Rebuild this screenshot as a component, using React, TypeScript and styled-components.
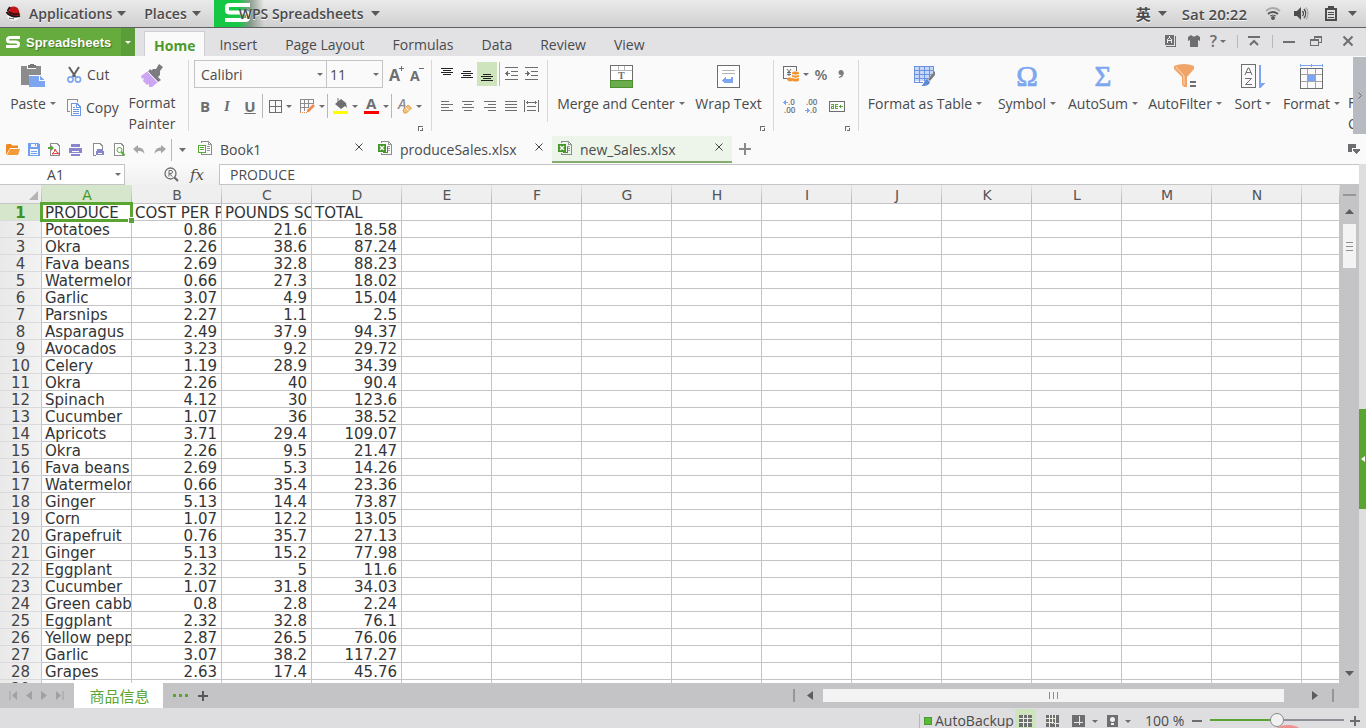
import React from "react";
import styled, { createGlobalStyle, css } from "styled-components";

const UI = `"Open Sans", "Noto Sans", "Noto Sans CJK SC", sans-serif`;
const SHEET = `"DejaVu Sans", "Noto Sans CJK SC", sans-serif`;
const ink = "#4a4a4c";
const line = "#c4c4c6";
const green = "#5aa532";
const gray = "#6e6e70";
const blue = "#7ea6f0";

const Global = createGlobalStyle`
  *, *::before, *::after { box-sizing: border-box; }
  body { margin: 0; overflow: hidden; background: #dedee0; font-family: ${UI}; font-size: 14px; color: ${ink}; }
  button, input, select { font: inherit; color: inherit; border: 0; background: none; padding: 0; margin: 0; outline: 0; }
  button { display: inline-flex; align-items: center; white-space: nowrap; }
  svg { display: block; flex: none; overflow: visible; }
`;

const Window = styled.div`
  display: flex;
  flex-direction: column;
  height: 100vh;
  overflow: hidden;
`;

/* ---------- desktop panel ---------- */
const Panel = styled.header`
  display: flex;
  align-items: center;
  flex: none;
  height: 28px;
  border-bottom: 1px solid #606062;
  background: linear-gradient(#eaeaea, #d0d0d0);
  font-weight: 600;
  text-shadow: 0 1px 0 #f6f6f6;
`;
const PanelMenu = styled.button<{ $ml: number }>`
  gap: 5px;
  height: 27px;
  margin-left: ${(p) => p.$ml}px;
  font-weight: 600;
  text-shadow: inherit;
`;
const MenuText = styled.span`
  padding-left: 3px;
`;
const InputMenu = styled(PanelMenu)`
  gap: 7px;
  font-size: 15px;
`;
const ActiveApp = styled(PanelMenu)`
  gap: 8px;
  padding-left: 25px;
  background: linear-gradient(90deg, #14c845 0, #14c845 24px, rgba(90, 120, 95, 0.65) 36px, rgba(200, 200, 200, 0) 50px);
  position: relative;
`;
const AppMark = styled.span`
  position: absolute;
  left: 11px;
  top: 3px;
  z-index: 0;
`;
const AppName = styled.span`
  position: relative;
`;
const Tray = styled.div`
  display: flex;
  align-items: center;
  margin-left: auto;
`;
const Clock = styled.span`
  margin: 0 19px 0 15px;
  font-size: 15px;
`;

/* ---------- ribbon tabs ---------- */
const TabBar = styled.nav`
  display: flex;
  align-items: stretch;
  flex: none;
  height: 28px;
  background: #e2e2e4;
`;
const AppButton = styled.button`
  width: 135px;
  margin-right: 9px;
  background: #65ab3d;
  color: #fff;
  font-family: "Liberation Sans", sans-serif;
  font-size: 13px;
  font-weight: 700;
  text-shadow: 1px 1px 1px #3e7422;
  svg { margin-left: 6px; }
`;
const AppLabel = styled.span`
  flex: 1;
  padding-left: 6px;
  text-align: left;
`;
const AppDrop = styled.span`
  display: flex;
  align-items: center;
  align-self: stretch;
  width: 14px;
  background: #5b9d39;
  svg { margin-left: 4px; }
`;
const RibbonTab = styled.button<{ $active?: boolean }>`
  padding: 5px 14px 0;
  ${(p) =>
    p.$active &&
    css`
      margin-top: 3px;
      padding: 2px 9px 0;
      border: 1px solid #cfcfd3;
      border-bottom: 0;
      background: #fafafa;
      color: #4c9a2a;
      font-weight: 700;
    `}
`;
const WindowTools = styled.div`
  display: flex;
  align-items: center;
  margin-left: auto;
  padding: 0 5px 2px 0;
`;
const ToolIcon = styled.button<{ $w: number }>`
  display: inline-flex;
  align-items: center;
  justify-content: center;
  width: ${(p) => p.$w}px;
  gap: 3px;
`;
const Help = styled.span`
  font-size: 16px;
  line-height: 20px;
  font-weight: 600;
  color: ${gray};
`;
const Bar = styled.span<{ $h: number }>`
  flex: none;
  width: 1px;
  height: ${(p) => p.$h}px;
  background: #b8b8bc;
`;

/* ---------- ribbon ---------- */
const Ribbon = styled.section`
  display: flex;
  flex: none;
  height: 78px;
  background: #fafafa;
  overflow: hidden;
`;
const Group = styled.div<{ $w: number; $short?: boolean }>`
  position: relative;
  display: flex;
  flex: none;
  width: ${(p) => p.$w}px;
  &::after {
    content: "";
    position: absolute;
    right: 0;
    top: 4px;
    width: 1px;
    height: ${(p) => (p.$short ? 62 : 71)}px;
    background: #d8d8da;
  }
`;
const Launcher = styled.button`
  position: absolute;
  right: 9px;
  bottom: 3px;
`;
const BigButton = styled.button<{ $w: number; $left?: boolean }>`
  flex: none;
  flex-direction: column;
  align-items: ${(p) => (p.$left ? "flex-start" : "center")};
  width: ${(p) => p.$w}px;
  padding-top: 7px;
`;
const BigIcon = styled.span`
  display: flex;
  align-items: center;
  height: 26px;
  margin-bottom: 4px;
`;
const BigLabel = styled.span<{ $left?: boolean }>`
  display: flex;
  align-items: center;
  gap: 4px;
  line-height: 21px;
  text-align: ${(p) => (p.$left ? "left" : "center")};
  white-space: pre;
`;
const Stack = styled.div<{ $w: number }>`
  display: flex;
  flex-direction: column;
  width: ${(p) => p.$w}px;
  padding: 2px 0 0 1px;
`;
const SmallButton = styled.button`
  gap: 5px;
  height: 33px;
`;
const Rows = styled.div<{ $pad: number }>`
  display: flex;
  flex-direction: column;
  padding: 4px 0 0 ${(p) => p.$pad}px;
`;
const Row = styled.div<{ $h: number }>`
  display: flex;
  align-items: center;
  height: ${(p) => p.$h}px;
`;
const Slot = styled.button<{ $w: number; $active?: boolean }>`
  justify-content: center;
  gap: 4px;
  width: ${(p) => p.$w}px;
  height: 24px;
  background: ${(p) => (p.$active ? "#cde4bd" : "none")};
`;
const Glyph = styled.span<{ $look?: "bold" | "italic" | "under" }>`
  font-size: 15px;
  line-height: 18px;
  color: ${gray};
  font-weight: ${(p) => (p.$look ? 700 : 600)};
  font-style: ${(p) => (p.$look === "italic" ? "italic" : "normal")};
  font-family: ${(p) => (p.$look === "italic" ? `"Liberation Serif", serif` : UI)};
  text-decoration: ${(p) => (p.$look === "under" ? "underline" : "none")};
`;
const Combo = styled.label<{ $w: number }>`
  display: flex;
  align-items: center;
  width: ${(p) => p.$w}px;
  height: 28px;
  padding: 0 3px 0 6px;
  border: 1px solid ${line};
  & + & { margin-left: -1px; padding-left: 3px; }
  select { flex: 1; min-width: 0; appearance: none; }
`;
const Actions = styled.div`
  display: flex;
  flex: 1;
  min-width: 0;
  overflow: hidden;
  padding-left: 4px;
`;
const ScrollRibbon = styled.button`
  flex: none;
  justify-content: center;
  width: 13px;
  margin-top: 1px;
  background: #b7bac1;
`;

/* ---------- quick access and documents ---------- */
const DocBar = styled.div`
  display: flex;
  align-items: center;
  flex: none;
  height: 30px;
  background: #fafafa;
`;
const Quick = styled.div`
  display: flex;
  align-items: center;
  width: 192px;
  padding: 1px 0 0 2px;
`;
const DocTab = styled.div<{ $active?: boolean }>`
  display: flex;
  align-items: center;
  width: 180px;
  height: 27px;
  margin-top: 1px;
  padding: 0 9px 0 6px;
  border-bottom: 2px solid ${(p) => (p.$active ? "#86ad70" : "transparent")};
  background: ${(p) => (p.$active ? "#edf5ea" : "none")};
`;
const DocName = styled.button`
  flex: 1;
  gap: 8px;
  padding-top: 2px;
  svg { margin-bottom: 4px; }
`;
const CloseDoc = styled.button`
  margin-bottom: 3px;
`;
const DocEnd = styled.span`
  margin-left: auto;
  padding-right: 6px;
`;

/* ---------- workspace ---------- */
const Workspace = styled.div`
  display: flex;
  flex: 1;
  min-height: 0;
`;
const Main = styled.main`
  display: flex;
  flex-direction: column;
  flex: 1;
  min-width: 0;
`;
const SidePane = styled.aside`
  display: flex;
  flex-direction: column;
  width: 7px;
  padding-top: 245px;
  background: #dedee0;
`;
const PaneHandle = styled.button`
  justify-content: center;
  height: 100px;
  background: ${green};
`;
const FormulaBar = styled.div`
  display: flex;
  flex: none;
  height: 21px;
  background: linear-gradient(#fafafa, #f0f0f0);
`;
const NameBox = styled.div`
  display: flex;
  align-items: center;
  width: 125px;
  padding-right: 3px;
  border: 1px solid ${line};
  border-left: 0;
  background: #fff;
  input { flex: 1; min-width: 0; padding-right: 4px; text-align: center; }
`;
const FxTools = styled.div`
  display: flex;
  align-items: center;
  width: 94px;
  padding-left: 39px;
  gap: 11px;
`;
const Fx = styled.button`
  font-family: "DejaVu Serif", serif;
  font-style: italic;
  font-size: 15px;
  line-height: 18px;
`;
const FormulaInput = styled.input`
  flex: 1;
  min-width: 0;
  padding-left: 10px !important;
  border: 1px solid ${line} !important;
  border-right: 0 !important;
  background: #fff !important;
`;
const SheetArea = styled.div`
  display: flex;
  flex: 1;
  min-height: 0;
`;
const Grid = styled.div`
  flex: 1;
  min-width: 0;
  overflow: hidden;
  background: #fff;
`;
const Table = styled.table`
  width: 100%;
  table-layout: fixed;
  border-collapse: separate;
  border-spacing: 0;
  font-family: ${SHEET};
  font-size: 15px;
  line-height: 16px;
  color: #333436;
`;
const ColHead = styled.th<{ $active?: boolean }>`
  height: 19px;
  padding: 3px 0 0;
  border-bottom: 1px solid ${line};
  background: linear-gradient(#e4e4e4, #b4b4b6) right / 1px 100% no-repeat, ${(p) => (p.$active ? "#d6e6cd" : "#efefef")};
  color: ${(p) => (p.$active ? "#3f9420" : "#555557")};
  font-size: 14px;
  font-weight: 400;
  line-height: 15px;
`;
const Corner = styled(ColHead)`
  svg { margin: 0 4px 0 auto; }
`;
const RowHead = styled.th<{ $active?: boolean }>`
  height: 17px;
  padding: 0;
  border-right: 1px solid ${line};
  border-bottom: 1px solid #dadadc;
  background: ${(p) => (p.$active ? "#d6e6cd" : "linear-gradient(90deg, #e9e9e9, #f2f2f2)")};
  color: ${(p) => (p.$active ? "#3f9420" : "#444446")};
  font-weight: ${(p) => (p.$active ? 700 : 400)};
`;
const RowNumber = styled.span`
  display: block;
  height: 18px;
  margin-bottom: -2px;
  line-height: 18px;
`;
const Cell = styled.td<{ $right?: boolean }>`
  position: relative;
  height: 17px;
  padding: 0;
  border-right: 1px solid ${line};
  border-bottom: 1px solid ${line};
  text-align: ${(p) => (p.$right ? "right" : "left")};
`;
const CellText = styled.span`
  display: block;
  height: 18px;
  margin-bottom: -2px;
  padding: 0 4px 0 3px;
  line-height: 18px;
  overflow: hidden;
  white-space: nowrap;
`;
const Cursor = styled.span`
  position: absolute;
  z-index: 1;
  inset: -2px;
  border: 3px solid ${green};
  pointer-events: none;
  &::after {
    content: "";
    position: absolute;
    right: -4px;
    bottom: -4px;
    width: 6px;
    height: 6px;
    border: solid #fff;
    border-width: 1px 0 0 1px;
    background: ${green};
  }
`;
const VScroll = styled.div`
  display: flex;
  flex-direction: column;
  align-items: center;
  flex: none;
  width: 19px;
  padding: 9px 0 7px;
  background: #c4c4c6;
`;
const Splitter = styled.span`
  width: 13px;
  height: 2px;
  margin-bottom: 13px;
  background: #969698;
`;
const VThumb = styled.span`
  display: flex;
  flex-direction: column;
  align-items: center;
  justify-content: center;
  gap: 3px;
  width: 13px;
  height: 44px;
  margin: 10px 0 auto;
  background: #f3f3f3;
`;
const VGrip = styled.i`
  width: 7px;
  height: 1px;
  background: #8e8e90;
`;
const SheetBar = styled.div`
  display: flex;
  align-items: center;
  flex: none;
  height: 25px;
  background: #c4c4c6;
`;
const SheetNav = styled.div`
  display: flex;
  align-items: center;
  justify-content: space-between;
  width: 74px;
  padding: 0 10px 0 9px;
`;
const SheetTab = styled.button`
  justify-content: center;
  align-self: stretch;
  width: 89px;
  padding-left: 2px;
  background: #fff;
  color: ${green};
  font-family: "Noto Sans CJK SC", sans-serif;
  font-size: 15px;
`;
const More = styled.button`
  gap: 3px;
  margin: 0 10px 0 10px;
`;
const Dot = styled.i`
  width: 3px;
  height: 3px;
  background: ${green};
`;
const HScroll = styled.div`
  display: flex;
  align-items: center;
  width: calc(42% - 5px);
  margin-left: auto;
  padding-right: 25px;
`;
const HEnd = styled.span`
  width: 2px;
  height: 13px;
  background: #969698;
`;
const HThumb = styled.span`
  display: flex;
  align-items: center;
  justify-content: center;
  gap: 3px;
  flex: 1;
  height: 13px;
  margin: 0 28px 0 10px;
  background: #f3f3f3;
`;
const HGrip = styled.i`
  width: 1px;
  height: 7px;
  background: #8e8e90;
`;
const HArrow = styled.button<{ $l: number; $r: number }>`
  margin: 0 ${(p) => p.$r}px 0 ${(p) => p.$l}px;
`;

/* ---------- status bar ---------- */
const Status = styled.footer`
  position: relative;
  display: flex;
  align-items: center;
  justify-content: flex-end;
  flex: none;
  height: 20px;
  padding: 6px 6px 0 0;
  background: #dedee0;
  overflow: hidden;
`;
const BackupLight = styled.i`
  width: 8px;
  height: 8px;
  margin: 0 3px 0 4px;
  border: 1px solid #4a9a2c;
  background: #58b838;
`;
const Backup = styled.span`
  width: 80px;
  line-height: 18px;
`;
const View = styled.button<{ $w: number; $active?: boolean }>`
  flex: none;
  justify-content: center;
  gap: 7px;
  align-self: flex-end;
  width: ${(p) => p.$w}px;
  height: 19px;
  padding-top: 5px;
  background: ${(p) => (p.$active ? "#cde4bd" : "none")};
`;
const ZoomText = styled.span`
  width: 47px;
  margin-left: 8px;
  line-height: 18px;
  white-space: nowrap;
`;
const ZoomRange = styled.input`
  appearance: none;
  width: 134px;
  height: 16px;
  margin: 0 6px 2px 8px !important;
  background: linear-gradient(90deg, ${green} 50%, #8e8e96 50%) center / 100% 2px no-repeat !important;
  &::-webkit-slider-thumb {
    appearance: none;
    width: 14px;
    height: 14px;
    border: 1px solid #8a8a8c;
    border-radius: 50%;
    background: #f1f1f1;
  }
`;
const Blob = styled.span`
  position: absolute;
  right: 62px;
  top: 17px;
  width: 32px;
  height: 20px;
  border-radius: 50%;
  background: #ee9090;
`;

/* ---------- drawings ---------- */
type D = { w: number; h: number; children: React.ReactNode; soft?: boolean };
const Svg = ({ w, h, children, soft }: D) => (
  <svg width={w} height={h} viewBox={`0 0 ${w} ${h}`} fill="none" shapeRendering={soft ? "auto" : "crispEdges"} aria-hidden="true">
    {children}
  </svg>
);
const Caret = ({ c = gray, big }: { c?: string; big?: boolean }) =>
  big ? (
    <Svg w={9} h={5} soft><path d="M0 0h9L4.500 5z" fill={c} /></Svg>
  ) : (
    <Svg w={6} h={3} soft><path d="M0 0h6L3 3z" fill={c} /></Svg>
  );
const LogoS = ({ w, h, t }: { w: number; h: number; t: number }) => {
  const i = t / 2;
  const m = h / 2;
  return (
    <Svg w={w} h={h} soft>
      <path d={`M${w} ${i}H${i + 3}Q${i} ${i} ${i} ${i + 2}V${m - 2}Q${i} ${m} ${i + 3} ${m}H${w - i - 3}Q${w - i} ${m} ${w - i} ${m + 2}V${h - i - 2}Q${w - i} ${h - i} ${w - i - 3} ${h - i}H0`} stroke="#fff" strokeWidth={t} />
    </Svg>
  );
};
const Lines = ({ rows, c = gray, w = 13, h = 13 }: { rows: number[][]; c?: string; w?: number; h?: number }) => (
  <Svg w={w} h={h}>
    {rows.map(([x, y, l]) => <rect key={y} x={x} y={y} width={l} height="1" fill={c} />)}
  </Svg>
);
const Hat = () => (
  <Svg w={15} h={15} soft>
    <path d="M1 8c0 4 2.500 6.500 6.500 6.500S14 12 14 9z" fill="#f8f8f8" />
    <path d="M4 1.500C6 0 9 0 11 1.500c1.500 1 2 3 2.500 5.500 1 1 1 3-1 3.500C8 11 3 9 1 6.500 1 5 2.500 5 3.200 5z" fill="#c41418" />
    <path d="M3 5.500C5 8 10 9 13 7.500" stroke="#1c1414" strokeWidth="1.500" />
    <path d="M.5 6C2 9 8 12 14 10M4 1L1.500 5" stroke="#1c1414" strokeWidth="1.800" />
    <path d="M3 12c2 1 3 0 5 1" stroke="#555" />
  </Svg>
);
const Paste = () => (
  <Svg w={25} h={24}>
    <path d="M1 2h5v3h9V2h5v9H8v10H0V2z" fill="#8c8c8e" />
    <path d="M7 1h2V0h4v1h2v3H7z" fill="#77777a" />
    <path d="M8 12h10v5h6v6H8z" fill={blue} />
    <path d="M19 12l5 4h-5z" fill={blue} />
  </Svg>
);
const Cut = () => (
  <Svg w={15} h={16} soft>
    <path d="M2 0l6.500 10M12 0L5.500 10" stroke="#5f5f62" strokeWidth="2" />
    <circle cx="3.500" cy="12.500" r="2.600" stroke={blue} strokeWidth="1.600" />
    <circle cx="11" cy="12.500" r="2.600" stroke={blue} strokeWidth="1.600" />
  </Svg>
);
const Copy = () => (
  <Svg w={14} h={17}>
    <path d="M3 12.500H.5V.5H10V3" stroke="#8c8c8e" />
    <path d="M4.500 4.500H10L13.500 8v8.500h-9z" stroke="#6d96e4" fill="#fff" />
    <path d="M9.500 4v4.500H14M6 8.500h2M6 10.500h6M6 12.500h6M6 14.500h6" stroke="#6d96e4" />
  </Svg>
);
const Brush = () => (
  <Svg w={24} h={24} soft>
    <path d="M10 5l11 11-3 2-10-10z M13 5l3 0 3-5 4 3-3 4v4l-3 3-7-6z" fill="#7c7c7e" />
    <path d="M8 7L1 12l1 3 2-1-1 3 4 4 2-1v3l3 0 6-5z" fill="#cda6f3" />
    <path d="M7.500 7.500L17.500 18" stroke="#fafafa" />
  </Svg>
);
const Big = ({ sign }: { sign: string }) => (
  <Svg w={16} h={18}>
    <text x="0" y="16" fontFamily="Open Sans" fontWeight="700" fontSize={sign === "+" ? 16 : 14} fill={gray}>A</text>
    <path d={sign === "+" ? "M10 3.500h5M12.500 1v5" : "M9 3.500h5"} stroke={gray} />
  </Svg>
);
const Borders = () => <Svg w={13} h={13}><path d="M.5.5h12v12H.5zM6.500 0v13M0 6.500h13" stroke={gray} /></Svg>;
const DrawBorders = () => (
  <Svg w={16} h={16}>
    <path d="M1.500 14V1.500H14.500V6M5.500 1v12M9.500 1v9M1 5.500h13M1 9.500h9" stroke="#8c8c8e" />
    <path d="M8 12l6-6 2 2-6 6H8z" fill="#f08a54" shapeRendering="auto" />
    <path d="M1 14.500h1m1 0h1m1 0h1m1 0h1" stroke="#f08a54" />
  </Svg>
);
const Fill = () => (
  <Svg w={15} h={16} soft>
    <path d="M2 6l6-5 5 4 1 5-2-2-4 3z" fill={gray} />
    <path d="M5 0v4" stroke={gray} />
    <rect y="13" width="15" height="3" fill="#ffff00" />
  </Svg>
);
const FontColor = () => (
  <Svg w={15} h={16}>
    <text x="2" y="11" fontFamily="Open Sans" fontWeight="700" fontSize="15" fill={gray}>A</text>
    <rect y="13" width="15" height="3" fill="#ff0000" />
  </Svg>
);
const ClearFmt = () => (
  <Svg w={14} h={16} soft>
    <text x="0" y="11" fontFamily="Open Sans" fontStyle="italic" fontSize="14" fontWeight="600" fill="#8c8c8e">A</text>
    <path d="M5 12l5-5 3.500 3-5 5H6z" fill="#f3c27c" stroke="#e89c3c" />
    <path d="M7.500 9.500l3 3" stroke="#fff" />
  </Svg>
);
const Indent = ({ out }: { out?: boolean }) => (
  <Svg w={13} h={14}>
    <path d="M0 .5h13M6 4.500h7M6 8.500h7M0 12.500h13" stroke={gray} />
    <path d={out ? "M0 6.500h5M1.500 5v3M2.500 4v5" : "M0 6.500h5M3.500 5v3M2.500 4v5"} stroke={gray} />
  </Svg>
);
const Distribute = () => (
  <Svg w={15} h={12}>
    <path d="M.5 0v12M14.500 0v12M2 2.500h11M3.500 1v3M11.500 1v3M3 6.500h9M3 10.500h9" stroke={gray} />
  </Svg>
);
const LaunchMark = () => <Svg w={5} h={5}><path d="M5 .5H.5V5M2 4.500h2.500V2" stroke={gray} /></Svg>;
const Merge = () => (
  <Svg w={23} h={23}>
    <rect x=".5" y=".5" width="22" height="22" rx="1" stroke={gray} fill="#fff" />
    <path d="M1 5.500h21M8.500 1v5M14.500 1v5" stroke="#b4b4b6" />
    <rect x="0" y="15" width="23" height="8" fill="#6aab4c" />
    <path d="M0 15.500h23M.5 15v7.500h22V15" stroke="#4c8e30" />
    <text x="8" y="14" fontFamily="Liberation Serif" fontWeight="700" fontSize="10" fill={gray}>T</text>
  </Svg>
);
const Wrap = () => (
  <Svg w={23} h={23}>
    <rect x=".5" y=".5" width="22" height="22" rx="1" stroke={gray} fill="#fff" />
    <path d="M5 5.500h13M5 8.500h13" stroke="#b4b4b6" />
    <path d="M5 15l4-3v2h5v-2h2v6H7z" fill={blue} />
  </Svg>
);
const Currency = () => (
  <Svg w={16} h={16} soft>
    <path d="M5 12.500H.5V.5h13V5" stroke={gray} shapeRendering="crispEdges" />
    <path d="M4 3l2 3 2-3M4 6.500h4M4 8.500h4M6 6v4" stroke={gray} />
    <path d="M9 7c0-2 7-2 7 0v7c0 2-7 2-7 0z" fill="#f0962e" />
    <path d="M4 13c0-2 5-2 5 0v2c-2 1-5 0-5-2z" fill="#f0962e" />
    <path d="M9 8.500q3.500 1.500 7 0M9 11.500q3.500 1.500 7 0" stroke="#fff" />
  </Svg>
);
const CommaStyle = () => (
  <Svg w={6} h={8} soft>
    <circle cx="3" cy="2.500" r="2.500" fill="#7c7c7e" />
    <path d="M5 2.500q.5 3.500-4 5" stroke="#7c7c7e" strokeWidth="1.300" />
  </Svg>
);
const Decimals = ({ more }: { more?: boolean }) => (
  <Svg w={14} h={16}>
    <text x={more ? 5 : 1} y="7" fontFamily="Open Sans" fontSize="8" fontWeight="600" fill={gray}>{more ? ".0" : ".00"}</text>
    <text x={more ? 1 : 5} y="15" fontFamily="Open Sans" fontSize="8" fontWeight="600" fill={gray}>{more ? ".00" : ".0"}</text>
    <path d={more ? "M0 4.500h5M1.500 3v3M2.500 2v5" : "M0 12.500h5M3.500 11v3M2.500 10v5"} stroke={blue} />
  </Svg>
);
const CellFmt = () => (
  <Svg w={16} h={11}>
    <rect x=".5" y=".5" width="15" height="10" stroke={gray} />
    <path d="M2 3.500h3M4.500 3v5M2 7.500h3M2.500 5v3M2 5.500h3M6.500 3v5M6 3.500h3M6 5.500h3M6 7.500h3M10 5.500h4M11.500 4v3" stroke="#5aa83a" />
  </Svg>
);
const TableFmt = () => (
  <Svg w={22} h={21} soft>
    <path d="M1 1h19v9l-7 5H1z" fill="#c5d6f6" />
    <path d="M1 .5h19M1 4.500h19M1 8.500h18M1 12.500h13M1 16.500h8M.5 0v17M5.500 0v17M10.500 0v15M15.500 0v11M19.500 0v7" stroke="#6b93dd" shapeRendering="crispEdges" />
    <path d="M21 5v4l-5 6-2-2z" fill="#7c7c7e" />
    <path d="M13 13l3 3c-1 4-5 4-9 4 3-1 3-6 6-7z" fill="#5f88d6" />
  </Svg>
);
const Greek = ({ ch }: { ch: string }) => (
  <Svg w={24} h={24} soft>
    <text x="12" y="22" textAnchor="middle" fontFamily="Liberation Serif" fontSize="29" fontWeight="400" stroke={blue} strokeWidth=".7" fill={blue}>{ch}</text>
  </Svg>
);
const Filter = () => (
  <Svg w={22} h={24} soft>
    <path d="M0 2q10-4 20 0v3l-7 8v10h-3l-2-2v-8L0 5z" fill="#f2a468" />
    <path d="M2 3l8 9v9" stroke="#fbd9be" />
    <path d="M16 18h6M16 22h6" stroke={gray} strokeWidth="2" />
  </Svg>
);
const Sort = () => (
  <Svg w={24} h={24}>
    <rect x=".5" y=".5" width="14" height="23" stroke={gray} />
    <path d="M4 11l3-7h1l3 7M5 8.500h5M4 14.500h6.500L4.500 20.500H11" stroke={gray} shapeRendering="auto" />
    <path d="M18 1h2v18h4l-5 5h-1z" fill={blue} />
  </Svg>
);
const FormatCells = () => (
  <Svg w={23} h={25}>
    <path d="M0 1.500h23M.5 0v3M11.500 0v3M22.500 0v3" stroke={blue} />
    <path d="M.5 4.500h22v20H.5zM7.500 5v19M15.500 5v19M1 10.500h21M1 17.500h21" stroke="#a4a4a6" />
    <path d="M.5 4.500h22v20H.5z" stroke={gray} />
    <rect x="8" y="11" width="7" height="6" fill={blue} />
  </Svg>
);
const Folder = () => (
  <Svg w={14} h={11} soft>
    <path d="M0 11V1l1-1h4l1 1.500h6V4H4z" fill="#f08a20" />
    <path d="M4 5h10l-2 6H1z" fill="#f59a3a" />
  </Svg>
);
const Save = () => (
  <Svg w={12} h={13}>
    <path d="M0 0h10l2 2v11H0z" fill="#73a0ec" />
    <path d="M3 1h6v3H3zM2 6h8v6H2z" fill="#f4f8ff" />
    <path d="M3 8.500h6M3 10.500h6M7.500 1v2" stroke="#73a0ec" />
  </Svg>
);
const Page = ({ kind }: { kind: "pdf" | "print" | "find" }) => (
  <Svg w={13} h={13} soft>
    <path d="M3 .5h6L11.500 3v9.500H2.500v-12z" stroke="#8c8c8e" fill="#fff" shapeRendering="crispEdges" />
    {kind === "pdf" && <><path d="M0 4h3V2l3 3-3 3V6H0z" fill="#58a838" /><path d="M4 11q3-2 3-5 1 4 5 5-4-1-8 0" stroke="#dd3a3a" /></>}
    {kind === "print" && <><path d="M5 6h8v7H5z" fill="#fff" /><path d="M6 6h6v2h1v4H5V8h1z" fill="#8a86cc" /><path d="M7 10.500h4" stroke="#fff" /></>}
    {kind === "find" && <><circle cx="7.500" cy="7" r="2.500" stroke="#58a838" fill="#fff" /><path d="M9.500 9l3 3.500" stroke="#58a838" strokeWidth="2" /></>}
  </Svg>
);
const Printer = () => (
  <Svg w={13} h={12}>
    <path d="M2 0h9v3H2zM0 4h13v5H0zM2 10h9v2H2z" fill="#8a86cc" />
    <path d="M3 7.500h7" stroke="#fff" />
  </Svg>
);
const Undo = ({ flip }: { flip?: boolean }) => (
  <Svg w={12} h={9} soft>
    <path transform={flip ? "translate(12 0) scale(-1 1)" : undefined} d="M0 4l5-4v2.500c4 0 6 2 6.500 6.500C10 6.500 8 6 5 6v2.500z" fill="#a6a6a8" />
  </Svg>
);
const DocIcon = ({ x }: { x?: boolean }) => (
  <Svg w={14} h={14}>
    <path d="M3.500 2V.5h7l3 3v10h-10V12" stroke="#8c8c8e" />
    <path d="M10.500 0v3.500H14M9 5.500h3M9 7.500h3M9 9.500h3" stroke="#9c9c9e" />
    {x ? (
      <>
        <path d="M9.500 6v5.500H5" stroke="#46952a" />
        <rect x="0" y="3" width="8" height="8" fill="#46952a" />
        <path d="M2 5l4 4M6 5L2 9" stroke="#fff" strokeWidth="1.400" shapeRendering="auto" />
      </>
    ) : (
      <><rect x=".5" y="4.500" width="7" height="7" fill="#fff" stroke="#58a838" /><path d="M2 6.500h4M2 8.500h4" stroke="#58a838" /></>
    )}
  </Svg>
);
const Cross = ({ s, t = 1 }: { s: number; t?: number }) => (
  <Svg w={s} h={s} soft><path d={`M.5.5L${s - 0.5} ${s - 0.5}M${s - 0.5}.5L.5 ${s - 0.5}`} stroke={t > 1 ? gray : "#444"} strokeWidth={t} /></Svg>
);
const Plus = ({ s, c = gray }: { s: number; c?: string }) => (
  <Svg w={s} h={s}><path d={`M0 ${s / 2}h${s}M${s / 2} 0v${s}`} stroke={c} strokeWidth="2" /></Svg>
);
const Wifi = () => (
  <Svg w={14} h={13} soft>
    <path d="M0 4q7-6 14 0" stroke="#a8a8aa" strokeWidth="2" />
    <path d="M2 7q5-4 10 0" stroke="#58585a" strokeWidth="2" />
    <path d="M4 9q3-2 6 0" stroke="#58585a" strokeWidth="1" />
    <circle cx="7" cy="11" r="2" fill="#58585a" />
  </Svg>
);
const Sound = () => (
  <Svg w={15} h={14} soft>
    <path d="M0 4h3l4-4v13L3 9H0z" fill="#4c4c4e" />
    <path d="M8.500 4q2 2.500 0 5M10 2q3.500 4.500 0 9" stroke="#4c4c4e" strokeWidth="1.300" />
    <path d="M12 .5q4 6 0 12" stroke="#b0b0b2" strokeWidth="1.500" />
  </Svg>
);
const Battery = () => (
  <Svg w={12} h={15}>
    <path d="M1 3h10v11H1zM4 1h4v2H4z" stroke="#4c4c4e" strokeWidth="2" />
    <path d="M3 6h6M3 8.500h6M3 11h6" stroke="#4c4c4e" />
  </Svg>
);
const Book = () => (
  <Svg w={11} h={12}>
    <path d="M0 0h9v10H0z" fill={gray} />
    <path d="M10.500 1v10.500H1" stroke={gray} />
    <path d="M2.500 8V5l2-3 2 3v3M3 5.500h3" stroke="#f0f0f0" />
  </Svg>
);
const Shirt = () => <Svg w={12} h={12} soft><path d="M0 2l3-2q3 3 6 0l3 2v4l-2-1v7H2V5L0 6z" fill={gray} /></Svg>;
const Collapse = () => <Svg w={12} h={10} soft><path d="M0 1h12" stroke={gray} strokeWidth="2" /><path d="M2 9l4-4 4 4" stroke={gray} strokeWidth="2" /></Svg>;
const Restore = () => <Svg w={12} h={10}><path d="M4 3V.5h7.500v6H9M3.500 1H12M.5 3.500h7.500v6H.5zM0 4.500h8" stroke={gray} /></Svg>;
const Magnifier = () => (
  <Svg w={15} h={15} soft>
    <circle cx="6.500" cy="6.500" r="5.500" stroke={gray} strokeWidth="1.300" />
    <path d="M10.500 10.500L14 14" stroke={gray} strokeWidth="2.200" />
    <path d="M5 9.500v-6h2q1.500 0 1.500 1.500T7 6.500H5l3.500 3" stroke={gray} />
  </Svg>
);
const Arrow = ({ dir, c = "#5c5c5e" }: { dir: "l" | "r" | "u" | "d"; c?: string }) => {
  const side = dir === "l" || dir === "r";
  const d = { l: "M6 0v9L0 4.500z", r: "M0 0v9l6-4.500z", u: "M0 5h9L4.500 0z", d: "M0 0h9L4.500 5z" }[dir];
  return <Svg w={side ? 6 : 9} h={side ? 9 : 5} soft><path d={d} fill={c} /></Svg>;
};
const Jump = ({ end }: { end?: boolean }) => (
  <Svg w={8} h={9} soft>
    <path d={end ? "M0 0v9l5-4.500z" : "M8 0v9L3 4.500z"} fill="#a0a0a2" />
    <path d={end ? "M7 0v9" : "M1 0v9"} stroke="#a0a0a2" />
  </Svg>
);
const GridView = ({ cut }: { cut?: boolean }) => (
  <Svg w={13} h={12}>
    <rect width="13" height="12" fill={gray} />
    <path d={cut ? "M0 3.500h10M0 7.500h8M3.500 0v12M6.500 0v9M9.500 0v12M8 8.500h5" : "M0 3.500h13M0 7.500h13M4.500 0v12M8.500 0v12"} stroke="#e6efe0" />
  </Svg>
);
const FreezeView = () => <Svg w={13} h={12}><rect width="13" height="12" fill={gray} /><path d="M7.500 1v9M2 7.500h9" stroke="#e8e8ea" strokeWidth="1" /></Svg>;
const BulbView = () => <Svg w={11} h={12} soft><rect width="11" height="12" fill={gray} /><circle cx="5.500" cy="4.500" r="2.500" fill="#eee" /><path d="M4 9h3" stroke="#eee" strokeWidth="2" /></Svg>;

/* ---------- data ---------- */
const columns = "ABCDEFGHIJKLMN".split("");
const rows: string[][] = [
  ["PRODUCE", "COST PER POUND", "POUNDS SOLD", "TOTAL"],
  ["Potatoes", "0.86", "21.6", "18.58"],
  ["Okra", "2.26", "38.6", "87.24"],
  ["Fava beans", "2.69", "32.8", "88.23"],
  ["Watermelon", "0.66", "27.3", "18.02"],
  ["Garlic", "3.07", "4.9", "15.04"],
  ["Parsnips", "2.27", "1.1", "2.5"],
  ["Asparagus", "2.49", "37.9", "94.37"],
  ["Avocados", "3.23", "9.2", "29.72"],
  ["Celery", "1.19", "28.9", "34.39"],
  ["Okra", "2.26", "40", "90.4"],
  ["Spinach", "4.12", "30", "123.6"],
  ["Cucumber", "1.07", "36", "38.52"],
  ["Apricots", "3.71", "29.4", "109.07"],
  ["Okra", "2.26", "9.5", "21.47"],
  ["Fava beans", "2.69", "5.3", "14.26"],
  ["Watermelon", "0.66", "35.4", "23.36"],
  ["Ginger", "5.13", "14.4", "73.87"],
  ["Corn", "1.07", "12.2", "13.05"],
  ["Grapefruit", "0.76", "35.7", "27.13"],
  ["Ginger", "5.13", "15.2", "77.98"],
  ["Eggplant", "2.32", "5", "11.6"],
  ["Cucumber", "1.07", "31.8", "34.03"],
  ["Green cabbage", "0.8", "2.8", "2.24"],
  ["Eggplant", "2.32", "32.8", "76.1"],
  ["Yellow pepper", "2.87", "26.5", "76.06"],
  ["Garlic", "3.07", "38.2", "117.27"],
  ["Grapes", "2.63", "17.4", "45.76"],
  [],
];

type ToolProps = { w: number; icon: React.ReactNode; label: string; drop?: boolean; left?: boolean };
const Tool = ({ w, icon, label, drop, left }: ToolProps) => (
  <BigButton $w={w} $left={left}>
    <BigIcon>{icon}</BigIcon>
    <BigLabel $left={left}>{label}{drop && <Caret />}</BigLabel>
  </BigButton>
);

export default function App() {
  return (
    <Window>
      <Global />
      <Panel>
        <PanelMenu $ml={6}><Hat /><MenuText>Applications</MenuText><Caret big c="#58585a" /></PanelMenu>
        <PanelMenu $ml={18}>Places<Caret big c="#58585a" /></PanelMenu>
        <ActiveApp $ml={13}>
          <AppMark><LogoS w={25} h={19} t={4} /></AppMark>
          <AppName>WPS Spreadsheets</AppName><Caret big c="#58585a" />
        </ActiveApp>
        <Tray>
          <InputMenu $ml={0}>英<Caret big c="#58585a" /></InputMenu>
          <Clock>Sat 20:22</Clock>
          <ToolIcon $w={14} aria-label="Network"><Wifi /></ToolIcon>
          <ToolIcon $w={43} aria-label="Volume"><Sound /></ToolIcon>
          <ToolIcon $w={15} aria-label="Battery"><Battery /></ToolIcon>
          <ToolIcon $w={28} aria-label="System menu"><Caret big c="#58585a" /></ToolIcon>
        </Tray>
      </Panel>

      <TabBar>
        <AppButton>
          <LogoS w={14} h={12} t={3} />
          <AppLabel>Spreadsheets</AppLabel>
          <AppDrop><Caret c="#fff" /></AppDrop>
        </AppButton>
        <RibbonTab $active>Home</RibbonTab>
        {["Insert", "Page Layout", "Formulas", "Data", "Review", "View"].map((t) => <RibbonTab key={t}>{t}</RibbonTab>)}
        <WindowTools>
          <ToolIcon $w={22} aria-label="Translate"><Book /></ToolIcon>
          <ToolIcon $w={26} aria-label="Skin"><Shirt /></ToolIcon>
          <ToolIcon $w={22} aria-label="Help"><Help>?</Help><Caret /></ToolIcon>
          <ToolIcon as="span" $w={16}><Bar $h={13} /></ToolIcon>
          <ToolIcon $w={18} aria-label="Collapse ribbon"><Collapse /></ToolIcon>
          <ToolIcon as="span" $w={18}><Bar $h={13} /></ToolIcon>
          <ToolIcon $w={16} aria-label="Minimize"><Lines w={12} h={4} rows={[[0, 2, 12], [0, 3, 12]]} /></ToolIcon>
          <ToolIcon $w={38} aria-label="Restore"><Restore /></ToolIcon>
          <ToolIcon $w={26} aria-label="Close"><Cross s={10} t={2} /></ToolIcon>
        </WindowTools>
      </TabBar>

      <Ribbon>
        <Group $w={189}>
          <Tool w={66} icon={<Paste />} label="Paste" drop />
          <Stack $w={57}>
            <SmallButton><Cut />Cut</SmallButton>
            <SmallButton><Copy />Copy</SmallButton>
          </Stack>
          <Tool w={58} icon={<Brush />} label={"Format\nPainter"} />
        </Group>
        <Group $w={243}>
          <Rows $pad={5}>
            <Row $h={28}>
              <Combo $w={133}><select aria-label="Font"><option>Calibri</option></select><Caret /></Combo>
              <Combo $w={57}><select aria-label="Font size"><option>11</option></select><Caret /></Combo>
              <Slot $w={28} aria-label="Grow font"><Big sign="+" /></Slot>
              <Slot $w={14} aria-label="Shrink font"><Big sign="-" /></Slot>
            </Row>
            <Row $h={36}>
              <Slot $w={22}><Glyph $look="bold">B</Glyph></Slot>
              <Slot $w={22}><Glyph $look="italic">I</Glyph></Slot>
              <Slot $w={24}><Glyph $look="under">U</Glyph></Slot>
              <Bar $h={24} />
              <Slot $w={34} aria-label="Borders"><Borders /><Caret /></Slot>
              <Slot $w={30} aria-label="Draw borders"><DrawBorders /><Caret /></Slot>
              <Bar $h={24} />
              <Slot $w={34} aria-label="Fill color"><Fill /><Caret /></Slot>
              <Slot $w={29} aria-label="Font color"><FontColor /><Caret /></Slot>
              <Bar $h={24} />
              <Slot $w={36} aria-label="Clear format"><ClearFmt /><Caret /></Slot>
            </Row>
          </Rows>
          <Launcher aria-label="Font settings"><LaunchMark /></Launcher>
        </Group>
        <Group $w={116} $short>
          <Rows $pad={5}>
            <Row $h={28}>
              <Slot $w={20} aria-label="Align top"><Lines c="#222" rows={[[0, 0, 12], [2, 2, 8], [0, 4, 12], [2, 6, 8]]} /></Slot>
              <Slot $w={20} aria-label="Align middle"><Lines c="#222" rows={[[2, 3, 8], [0, 5, 12], [2, 7, 8], [0, 9, 12]]} /></Slot>
              <Slot $w={20} $active aria-label="Align bottom"><Lines c="#222" rows={[[2, 6, 8], [0, 8, 12], [2, 10, 8], [0, 12, 12]]} /></Slot>
              <ToolIcon as="span" $w={5}><Bar $h={24} /></ToolIcon>
              <Slot $w={19} aria-label="Decrease indent"><Indent out /></Slot>
              <Slot $w={21} aria-label="Increase indent"><Indent /></Slot>
            </Row>
            <Row $h={36}>
              <Slot $w={20} aria-label="Align left"><Lines h={10} rows={[[0, 0, 8], [0, 3, 12], [0, 6, 8], [0, 9, 12]]} /></Slot>
              <Slot $w={23} aria-label="Center"><Lines h={10} rows={[[0, 0, 12], [2, 3, 8], [0, 6, 12], [2, 9, 8]]} /></Slot>
              <Slot $w={21} aria-label="Align right"><Lines h={10} rows={[[0, 0, 12], [4, 3, 8], [0, 6, 12], [4, 9, 8]]} /></Slot>
              <Slot $w={20} aria-label="Justify"><Lines h={10} rows={[[0, 0, 12], [0, 3, 12], [0, 6, 12], [0, 9, 12]]} /></Slot>
              <Slot $w={20} aria-label="Distribute"><Distribute /></Slot>
            </Row>
          </Rows>
        </Group>
        <Group $w={226}>
          <Tool w={146} icon={<Merge />} label="Merge and Center" drop />
          <Tool w={69} icon={<Wrap />} label="Wrap Text" />
          <Launcher aria-label="Alignment settings"><LaunchMark /></Launcher>
        </Group>
        <Group $w={85}>
          <Rows $pad={5}>
            <Row $h={28}>
              <Slot $w={34} aria-label="Currency"><Currency /><Caret /></Slot>
              <Slot $w={16}><Glyph>%</Glyph></Slot>
              <Slot $w={24} aria-label="Comma style"><CommaStyle /></Slot>
            </Row>
            <Row $h={36}>
              <Slot $w={22} aria-label="Increase decimal"><Decimals more /></Slot>
              <Slot $w={22} aria-label="Decrease decimal"><Decimals /></Slot>
              <Slot $w={28} aria-label="Cell format"><CellFmt /></Slot>
            </Row>
          </Rows>
          <Launcher aria-label="Number settings"><LaunchMark /></Launcher>
        </Group>
        <Actions>
          <Tool w={124} icon={<TableFmt />} label="Format as Table" drop />
          <Tool w={80} icon={<Greek ch="Ω" />} label="Symbol" drop />
          <Tool w={72} icon={<Greek ch="Σ" />} label="AutoSum" drop />
          <Tool w={92} icon={<Filter />} label="AutoFilter" drop />
          <Tool w={44} icon={<Sort />} label="Sort" drop />
          <Tool w={73} icon={<FormatCells />} label="Format" drop />
          <Tool w={50} icon={null} label={"Freeze\nCells"} left />
        </Actions>
        <ScrollRibbon aria-label="More tools"><Svg w={4} h={7} soft><path d="M.5.5l3 3-3 3" stroke={gray} /></Svg></ScrollRibbon>
      </Ribbon>

      <DocBar>
        <Quick>
          <ToolIcon $w={22} aria-label="Open"><Folder /></ToolIcon>
          <ToolIcon $w={20} aria-label="Save"><Save /></ToolIcon>
          <ToolIcon $w={21} aria-label="Export PDF"><Page kind="pdf" /></ToolIcon>
          <ToolIcon $w={21} aria-label="Print"><Printer /></ToolIcon>
          <ToolIcon $w={22} aria-label="Quick print"><Page kind="print" /></ToolIcon>
          <ToolIcon $w={20} aria-label="Print preview"><Page kind="find" /></ToolIcon>
          <ToolIcon $w={21} aria-label="Undo"><Undo /></ToolIcon>
          <ToolIcon $w={22} aria-label="Redo"><Undo flip /></ToolIcon>
          <Bar $h={22} />
          <ToolIcon $w={20} aria-label="Customize"><Svg w={7} h={4} soft><path d="M0 0h7L3.500 4z" fill={gray} /></Svg></ToolIcon>
        </Quick>
        <DocTab><DocName><DocIcon />Book1</DocName><CloseDoc aria-label="Close Book1"><Cross s={8} /></CloseDoc></DocTab>
        <DocTab><DocName><DocIcon x />produceSales.xlsx</DocName><CloseDoc aria-label="Close produceSales.xlsx"><Cross s={8} /></CloseDoc></DocTab>
        <DocTab $active><DocName><DocIcon x />new_Sales.xlsx</DocName><CloseDoc aria-label="Close new_Sales.xlsx"><Cross s={8} /></CloseDoc></DocTab>
        <ToolIcon $w={26} aria-label="New document"><Plus s={12} c="#8a8a8c" /></ToolIcon>
        <DocEnd><Svg w={12} h={10}><path d="M0 0h8v4H4v4H0z" fill={gray} /><path d="M5 5h7v1l-3.500 4L5 6z" fill={gray} /></Svg></DocEnd>
      </DocBar>

      <Workspace>
        <Main>
          <FormulaBar>
            <NameBox><input aria-label="Name box" defaultValue="A1" /><Caret /></NameBox>
            <FxTools><ToolIcon $w={15} aria-label="Find"><Magnifier /></ToolIcon><Fx>fx</Fx></FxTools>
            <FormulaInput aria-label="Formula" defaultValue="PRODUCE" />
          </FormulaBar>
          <SheetArea>
            <Grid>
              <Table>
                <colgroup>
                  <col width="42" />
                  {columns.map((c) => <col key={c} width="90" />)}
                  <col />
                </colgroup>
                <thead>
                  <tr>
                    <Corner aria-label="Select all"><Svg w={9} h={9} soft><path d="M9 0v9H0z" fill="#b4b4b6" /></Svg></Corner>
                    {columns.map((c, i) => <ColHead key={c} $active={i === 0}>{c}</ColHead>)}
                    <ColHead />
                  </tr>
                </thead>
                <tbody>
                  {rows.map((r, n) => (
                    <tr key={n}>
                      <RowHead $active={n === 0}><RowNumber>{n + 1}</RowNumber></RowHead>
                      {columns.map((c, i) => (
                        <Cell key={c} $right={n > 0 && i > 0}>
                          {r[i] && <CellText>{r[i]}</CellText>}
                          {n === 0 && i === 0 && <Cursor />}
                        </Cell>
                      ))}
                      <Cell />
                    </tr>
                  ))}
                </tbody>
              </Table>
            </Grid>
            <VScroll>
              <Splitter />
              <Arrow dir="u" />
              <VThumb><VGrip /><VGrip /><VGrip /></VThumb>
              <Arrow dir="d" />
            </VScroll>
          </SheetArea>
          <SheetBar>
            <SheetNav>
              <Jump /><Arrow dir="l" c="#a0a0a2" /><Arrow dir="r" c="#a0a0a2" /><Jump end />
            </SheetNav>
            <SheetTab>商品信息</SheetTab>
            <More aria-label="More sheets"><Dot /><Dot /><Dot /></More>
            <button aria-label="Add sheet"><Plus s={10} c="#58585a" /></button>
            <HScroll>
              <HEnd />
              <HArrow $l={12} $r={0} aria-label="Scroll left"><Arrow dir="l" /></HArrow>
              <HThumb><HGrip /><HGrip /><HGrip /></HThumb>
              <HArrow $l={0} $r={14} aria-label="Scroll right"><Arrow dir="r" /></HArrow>
              <HEnd />
            </HScroll>
          </SheetBar>
        </Main>
        <SidePane>
          <PaneHandle aria-label="Open side pane"><Svg w={4} h={6} soft><path d="M4 0v6L0 3z" fill="#fff" /></Svg></PaneHandle>
        </SidePane>
      </Workspace>

      <Status>
        <Bar $h={14} />
        <BackupLight />
        <Backup>AutoBackup</Backup>
        <View $w={21} $active aria-label="Normal view"><GridView /></View>
        <View $w={33} aria-label="Page break view"><GridView cut /></View>
        <View $w={32} aria-label="Freeze panes"><FreezeView /><Caret /></View>
        <View $w={36} aria-label="Eye care mode"><BulbView /><Caret /></View>
        <ZoomText>100 %</ZoomText>
        <button aria-label="Zoom out"><Svg w={10} h={2}><rect width="10" height="2" fill={gray} /></Svg></button>
        <ZoomRange type="range" aria-label="Zoom" defaultValue={50} />
        <button aria-label="Zoom in"><Plus s={10} /></button>
        <Blob />
      </Status>
    </Window>
  );
}
